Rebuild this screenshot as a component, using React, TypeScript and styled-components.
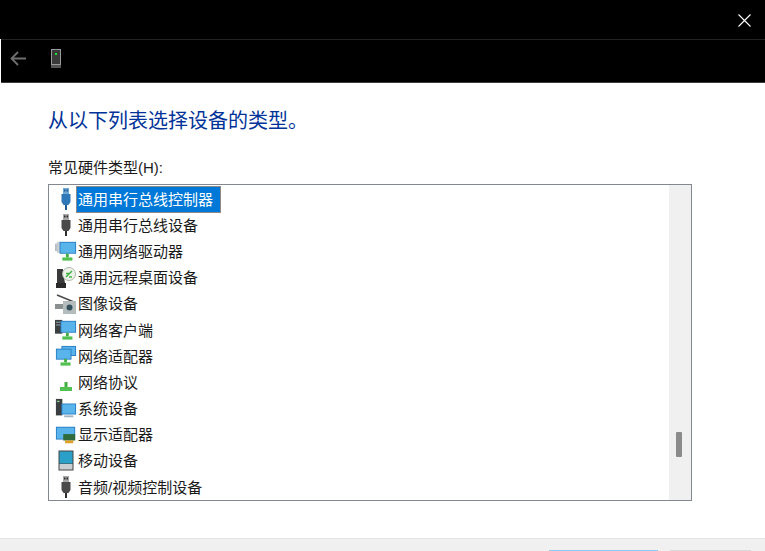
import React from 'react';
import styled, { createGlobalStyle } from 'styled-components';

const GlobalStyle = createGlobalStyle`
    * {
        box-sizing: border-box;
    }
    html, body {
        margin: 0;
        padding: 0;
        background: #fff;
    }
`;

const Page = styled.div`
    width: 765px;
    height: 551px;
    display: flex;
    flex-direction: column;
    overflow: hidden;
    font-family: "Liberation Sans", "Noto Sans CJK SC", sans-serif;
    color: #1a1a1a;
`;

const TitleBar = styled.div`
    height: 39px;
    flex: none;
    background: #000;
    display: flex;
    justify-content: flex-end;
    align-items: center;
    padding: 1px 14px 0 0;
`;

const NavBar = styled.div`
    height: 44px;
    flex: none;
    background: #000;
    border-top: 1px solid #232323;
    border-bottom: 1px solid #3c3c3c;
    margin-left: 1px;
    display: flex;
    align-items: center;
    gap: 24px;
    padding: 0 0 5px 9px;
`;

const Content = styled.div`
    flex: 1;
    padding: 24px 73px 0 48px;
    display: flex;
    flex-direction: column;
`;

const Title = styled.div`
    font-size: 20px;
    line-height: 28px;
    color: #003399;
`;

const FieldLabel = styled.div`
    font-size: 15px;
    line-height: 20px;
    margin: 23px 0 6px 0;
`;

const ListBox = styled.div`
    height: 317px;
    border: 1px solid #828790;
    display: flex;
    background: #fff;
`;

const Rows = styled.div`
    flex: 1;
    padding-top: 1px;
    display: flex;
    flex-direction: column;
`;

const Row = styled.div`
    height: 26.2px;
    display: flex;
    align-items: center;
    padding-left: 6px;
    flex: none;
`;

const IconBox = styled.div`
    width: 22px;
    height: 24px;
    flex: none;
    display: flex;
    align-items: center;
    justify-content: center;
`;

const RowText = styled.span<{ $selected?: boolean }>`
    font-size: 15px;
    line-height: 25px;
    padding: 0 7px 0 1px;
    background: ${p => (p.$selected ? '#0078d7' : 'transparent')};
    color: ${p => (p.$selected ? '#fff' : '#1a1a1a')};
    outline: ${p => (p.$selected ? '1px solid #8a8a8a' : 'none')};
`;

const ScrollTrack = styled.div`
    width: 22px;
    flex: none;
    background: #f0f0f0;
    position: relative;
`;

const ScrollThumb = styled.div`
    position: absolute;
    left: 7px;
    top: 247px;
    width: 6px;
    height: 25px;
    background: #8b8b8b;
    border-radius: 1px;
`;

const Footer = styled.div`
    height: 13px;
    flex: none;
    background: #f0f0f0;
    border-top: 1px solid #e4e4e4;
    display: flex;
    justify-content: flex-end;
    gap: 12px;
    padding: 11px 14px 0 0;
`;

const FooterButton = styled.div<{ $primary?: boolean }>`
    width: ${p => (p.$primary ? '109px' : '81px')};
    height: 20px;
    flex: none;
    border-top: 1px solid ${p => (p.$primary ? '#8fcaf2' : '#d8d8d8')};
    background: #e6e6e6;
`;

const BackIcon = () => (
    <svg width="17" height="15" viewBox="0 0 17 15" fill="none" stroke="#6e6e6e" strokeWidth="1.8">
        <path d="M16 7.500H2M8 1 1.500 7.500 8 14" />
    </svg>
);

const CloseIcon = () => (
    <svg width="13" height="13" viewBox="0 0 13 13" stroke="#fff" strokeWidth="1.1">
        <path d="M.5.5l12 12M12.500.5l-12 12" />
    </svg>
);

const DeviceIcon = () => (
    <svg width="10" height="19" viewBox="0 0 10 19">
        <rect x="0.500" y="0.500" width="9" height="15" fill="#3a3a3a" stroke="#999" />
        <rect x="0" y="16" width="10" height="3" fill="#555" />
        <rect x="4" y="4" width="2" height="2" fill="#25e02f" />
    </svg>
);

const PlugIcon = ({ body, dark, tip }: { body: string; dark: string; tip: string }) => (
    <svg width="14" height="22" viewBox="0 0 14 22">
        <rect x="4" y="0" width="6" height="6" fill={tip} />
        <rect x="5" y="1.500" width="1.500" height="2" fill={dark} />
        <rect x="7.500" y="1.500" width="1.500" height="2" fill={dark} />
        <path d="M2.500 6h9v8l-2 3h-5l-2-3z" fill={body} />
        <rect x="6" y="17" width="2" height="5" fill={dark} />
    </svg>
);

const Stand = ({ x = 8 }: { x?: number }) => (
    <>
        <rect x={x + 3} y="14" width="3" height="4" fill="#3fae3f" />
        <rect x={x - 1} y="18" width="11" height="3.500" fill="#52c152" />
    </>
);

const Screen = ({ x, y, w, h }: { x: number; y: number; w: number; h: number }) => (
    <>
        <rect x={x} y={y} width={w} height={h} fill="#2a7fc4" />
        <rect x={x + 1} y={y + 1} width={w - 2} height={h - 2} fill="#58b4ea" />
    </>
);

const DriverIcon = () => (
    <svg width="24" height="22" viewBox="0 0 24 22">
        <rect x="0" y="3" width="8" height="8" fill="#b4bec4" />
        <rect x="2" y="1" width="4" height="12" fill="#c6ced2" />
        <Screen x={5} y={1} w={18} h={13} />
        <Stand x={9} />
    </svg>
);

const RemoteIcon = () => (
    <svg width="22" height="22" viewBox="0 0 22 22">
        <path d="M2 2h6v3L10 16H2z" fill="#3a3a3a" />
        <rect x="1" y="16" width="10" height="5" fill="#2a2a2a" />
        <circle cx="14" cy="7" r="6.500" fill="#eef3ea" stroke="#aeb8a8" />
        <path d="M11 10l6-6M11 6.500h3M14 10h3" stroke="#45b245" strokeWidth="1.500" />
    </svg>
);

const CameraIcon = () => (
    <svg width="22" height="22" viewBox="0 0 22 22">
        <path d="M2 2l17 7" stroke="#4a4a4a" strokeWidth="1.500" />
        <rect x="0" y="11" width="8" height="5" fill="#8a8f90" />
        <rect x="8" y="8" width="13" height="13" fill="#b5bcbe" />
        <circle cx="14.500" cy="14.500" r="3" fill="#34505c" />
    </svg>
);

const ClientIcon = () => (
    <svg width="24" height="22" viewBox="0 0 24 22">
        <rect x="0" y="0" width="8" height="15" fill="#3b3f42" />
        <rect x="1" y="2" width="5" height="1" fill="#9aa" />
        <rect x="1" y="5" width="5" height="1" fill="#9aa" />
        <Screen x={6} y={1} w={17} h={13} />
        <Stand x={9} />
    </svg>
);

const AdapterIcon = () => (
    <svg width="24" height="22" viewBox="0 0 24 22">
        <Screen x={7} y={0} w={16} h={11} />
        <Screen x={1} y={3} w={17} h={12} />
        <Stand x={7} />
    </svg>
);

const ProtocolIcon = () => (
    <svg width="22" height="22" viewBox="0 0 22 22">
        <path d="M9.500 11h3v5h-3z" fill="#3fae3f" />
        <rect x="5" y="16" width="12" height="4" fill="#52c152" />
    </svg>
);

const SystemIcon = () => (
    <svg width="24" height="22" viewBox="0 0 24 22">
        <rect x="1" y="0" width="7" height="18" fill="#3b3f42" />
        <rect x="2" y="2" width="3" height="1.500" fill="#8fc98f" />
        <Screen x={7} y={5} w={16} h={12} />
        <rect x="10" y="18" width="10" height="2" fill="#9fb4c0" />
    </svg>
);

const DisplayIcon = () => (
    <svg width="24" height="22" viewBox="0 0 24 22">
        <Screen x={1} y={2} w={21} h={14} />
        <rect x="9" y="10" width="13" height="7" fill="#2f6b3c" />
        <rect x="11" y="17" width="9" height="3" fill="#e0a020" />
    </svg>
);

const MobileIcon = () => (
    <svg width="16" height="21" viewBox="0 0 16 21">
        <rect x="0.500" y="0.500" width="15" height="20" fill="#444" />
        <rect x="1.500" y="1.500" width="13" height="12" fill="#2aa0c8" />
        <rect x="1.500" y="14" width="13" height="5.500" fill="#c9ced2" />
    </svg>
);

const rows: { text: string; icon: React.ReactNode; selected?: boolean }[] = [
    { text: '通用串行总线控制器', icon: <PlugIcon body="#2f78b8" dark="#1f5a90" tip="#6ea6d4" />, selected: true },
    { text: '通用串行总线设备', icon: <PlugIcon body="#4a4a4a" dark="#2e2e2e" tip="#a8a8a8" /> },
    { text: '通用网络驱动器', icon: <DriverIcon /> },
    { text: '通用远程桌面设备', icon: <RemoteIcon /> },
    { text: '图像设备', icon: <CameraIcon /> },
    { text: '网络客户端', icon: <ClientIcon /> },
    { text: '网络适配器', icon: <AdapterIcon /> },
    { text: '网络协议', icon: <ProtocolIcon /> },
    { text: '系统设备', icon: <SystemIcon /> },
    { text: '显示适配器', icon: <DisplayIcon /> },
    { text: '移动设备', icon: <MobileIcon /> },
    { text: '音频/视频控制设备', icon: <PlugIcon body="#4a4a4a" dark="#2e2e2e" tip="#a8a8a8" /> },
];

const App: React.FC = () => (
    <Page>
        <GlobalStyle />
        <TitleBar>
            <CloseIcon />
        </TitleBar>
        <NavBar>
            <BackIcon />
            <DeviceIcon />
        </NavBar>
        <Content>
            <Title>从以下列表选择设备的类型。</Title>
            <FieldLabel>常见硬件类型(H):</FieldLabel>
            <ListBox>
                <Rows>
                    {rows.map(row => (
                        <Row key={row.text}>
                            <IconBox>{row.icon}</IconBox>
                            <RowText $selected={row.selected}>{row.text}</RowText>
                        </Row>
                    ))}
                </Rows>
                <ScrollTrack>
                    <ScrollThumb />
                </ScrollTrack>
            </ListBox>
        </Content>
        <Footer>
            <FooterButton $primary />
            <FooterButton />
        </Footer>
    </Page>
);

export default App;
